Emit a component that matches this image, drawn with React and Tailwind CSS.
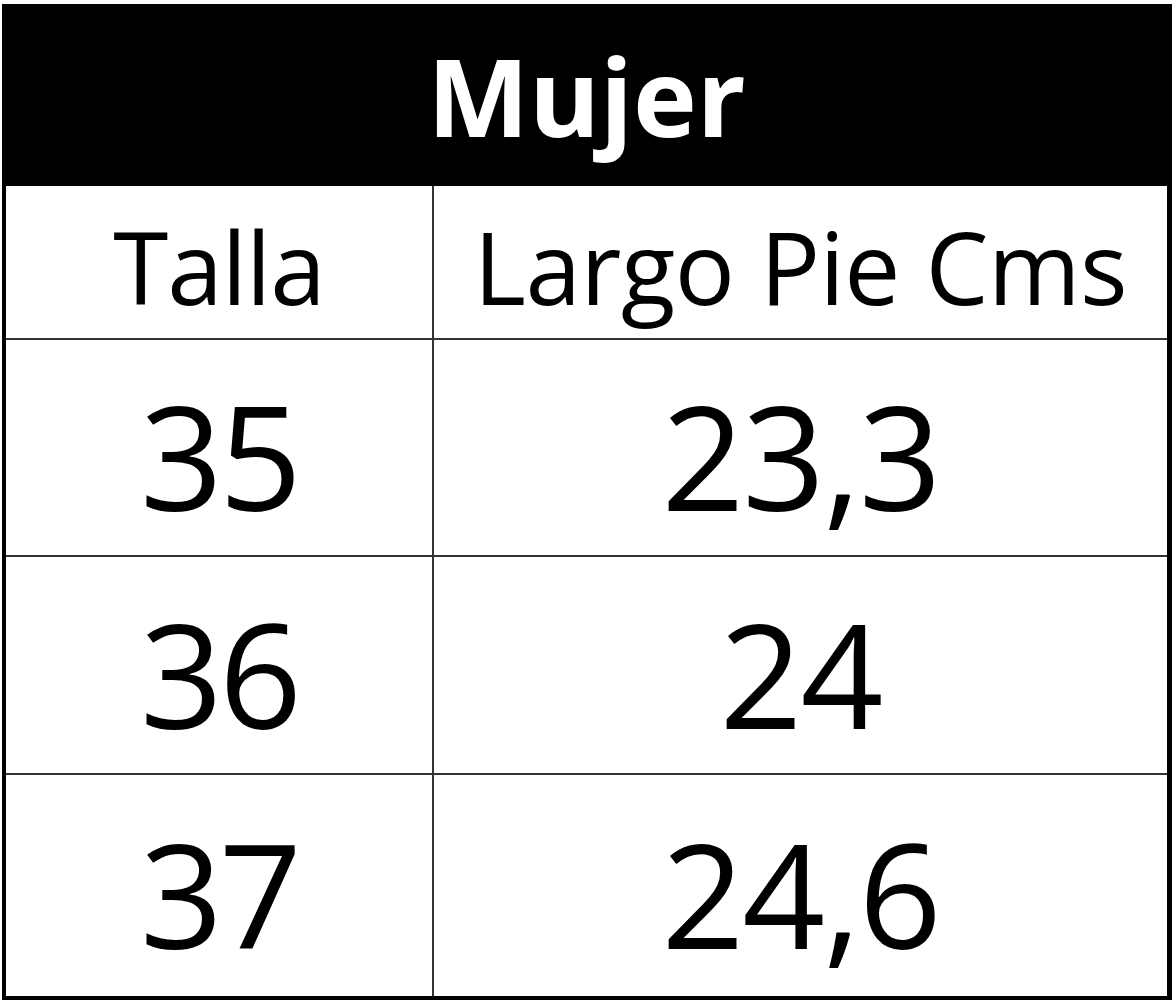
const rows = [
  { talla: '35', largo: '23,3', h: 'h-[217px]', line: true },
  { talla: '36', largo: '24', h: 'h-[218px]', line: true },
  { talla: '37', largo: '24,6', h: 'h-[221px]', line: false },
];

const App = () => {
  return (
    <div className="w-[1172px] h-[1000px] bg-white pt-[4px] pl-[2px] font-['Open_Sans',sans-serif] text-black">
      <div className="w-[1170px] border-l-4 border-r-[5px] border-b-4 border-black">
        <div className="h-[182px] bg-black flex items-center justify-center">
          <span className="text-white font-bold text-[108px] leading-none pt-[2px] tracking-[0px]">Mujer</span>
        </div>

        <div className="h-[154px] flex border-b-2 border-[#333]">
          <div className="w-[428px] border-r-2 border-[#333] flex items-center justify-center">
            <span className="text-[100px] leading-none pt-[8px] tracking-[-1px]">Talla</span>
          </div>
          <div className="flex-1 flex items-center justify-center">
            <span className="text-[100px] leading-none pt-[8px] tracking-[-0.5px]">Largo Pie Cms</span>
          </div>
        </div>

        {rows.map((row) => (
          <div
            key={row.talla}
            className={`${row.h} flex ${row.line ? 'border-b-2 border-[#333]' : ''}`}
          >
            <div className="w-[428px] border-r-2 border-[#333] flex items-center justify-center">
              <span className="text-[145px] leading-none pt-[14px] tracking-[-4px]">{row.talla}</span>
            </div>
            <div className="flex-1 flex items-center justify-center">
              <span className="text-[145px] leading-none pt-[14px] tracking-[-2px]">{row.largo}</span>
            </div>
          </div>
        ))}
      </div>
    </div>
  );
};

export default App;
